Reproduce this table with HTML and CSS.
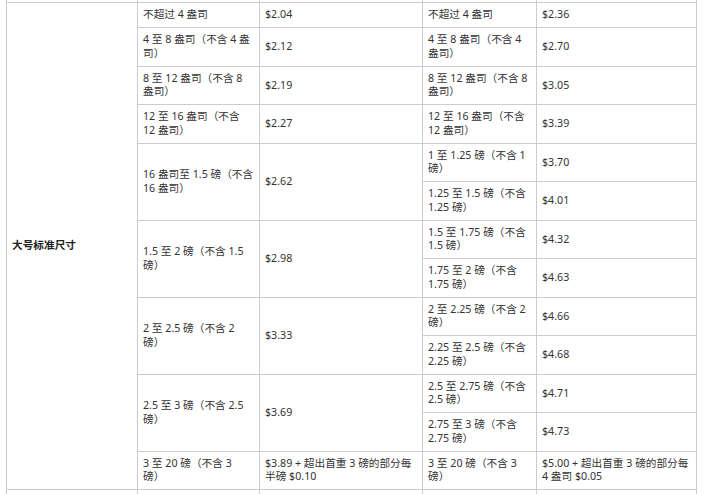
FILE: index.html
```html
<!DOCTYPE html>
<html lang="zh-CN">
<head>
    <meta charset="UTF-8">
    <meta name="viewport" content="width=device-width, initial-scale=1.0">
    <title>配送费用</title>
    <link rel="stylesheet" href="styles.css">
</head>
<body>
<table class="rates">
    <colgroup>
        <col class="col-tier">
        <col class="col-weight">
        <col class="col-fee">
        <col class="col-weight2">
        <col class="col-fee2">
    </colgroup>
    <tbody>
        <tr class="stub-top">
            <td></td><td></td><td></td><td></td><td></td>
        </tr>
        <tr>
            <td class="tier" rowspan="13">大号标准尺寸</td>
            <td>不超过 4 盎司</td>
            <td>$2.04</td>
            <td>不超过 4 盎司</td>
            <td>$2.36</td>
        </tr>
        <tr>
            <td>4 至 8 盎司（不含 4 盎司）</td>
            <td>$2.12</td>
            <td>4 至 8 盎司（不含 4 盎司）</td>
            <td>$2.70</td>
        </tr>
        <tr>
            <td>8 至 12 盎司（不含 8 盎司）</td>
            <td>$2.19</td>
            <td>8 至 12 盎司（不含 8 盎司）</td>
            <td>$3.05</td>
        </tr>
        <tr>
            <td>12 至 16 盎司（不含 12 盎司）</td>
            <td>$2.27</td>
            <td>12 至 16 盎司（不含 12 盎司）</td>
            <td>$3.39</td>
        </tr>
        <tr>
            <td rowspan="2">16 盎司至 1.5 磅（不含 16 盎司）</td>
            <td rowspan="2">$2.62</td>
            <td>1 至 1.25 磅（不含 1 磅）</td>
            <td>$3.70</td>
        </tr>
        <tr>
            <td>1.25 至 1.5 磅（不含 1.25 磅）</td>
            <td>$4.01</td>
        </tr>
        <tr>
            <td rowspan="2">1.5 至 2 磅（不含 1.5 磅）</td>
            <td rowspan="2">$2.98</td>
            <td>1.5 至 1.75 磅（不含 1.5 磅）</td>
            <td>$4.32</td>
        </tr>
        <tr>
            <td>1.75 至 2 磅（不含 1.75 磅）</td>
            <td>$4.63</td>
        </tr>
        <tr>
            <td rowspan="2">2 至 2.5 磅（不含 2<br>磅）</td>
            <td rowspan="2">$3.33</td>
            <td>2 至 2.25 磅（不含 2 磅）</td>
            <td>$4.66</td>
        </tr>
        <tr>
            <td>2.25 至 2.5 磅（不含 2.25 磅）</td>
            <td>$4.68</td>
        </tr>
        <tr>
            <td rowspan="2">2.5 至 3 磅（不含 2.5 磅）</td>
            <td rowspan="2">$3.69</td>
            <td>2.5 至 2.75 磅（不含 2.5 磅）</td>
            <td>$4.71</td>
        </tr>
        <tr>
            <td>2.75 至 3 磅（不含 2.75 磅）</td>
            <td>$4.73</td>
        </tr>
        <tr>
            <td>3 至 20 磅（不含 3<br>磅）</td>
            <td>$3.89 + 超出首重 3 磅的部分每半磅 $0.10</td>
            <td>3 至 20 磅（不含 3<br>磅）</td>
            <td>$5.00 + 超出首重 3 磅的部分每 4 盎司 $0.05</td>
        </tr>
        <tr class="stub-bottom">
            <td>&nbsp;</td><td>&nbsp;</td><td>&nbsp;</td><td>&nbsp;</td><td>&nbsp;</td>
        </tr>
    </tbody>
</table>
</body>
</html>
```

FILE: styles.css
```css
body {
    margin: 0;
    font-family: "Noto Sans", "Noto Sans CJK SC", sans-serif;
    font-size: 10.67px;
    color: #333;
    background-color: #fff;
    overflow: hidden;
}
.rates {
    border-collapse: collapse;
    table-layout: fixed;
    width: 690px;
    margin-left: 6px;
}
.col-tier { width: 131px; }
.col-weight { width: 122px; }
.col-fee { width: 163px; }
.col-weight2 { width: 114px; }
.col-fee2 { width: 160px; }
.rates td {
    border: 1px solid #ccc;
    padding: 5.25px 5px;
    line-height: 13.5px;
    vertical-align: middle;
    text-align: left;
}
.rates td.tier {
    font-weight: bold;
    color: #222;
}
.stub-top td {
    border-top: none;
    padding: 0;
    height: 2px;
    line-height: 0;
}
.stub-bottom td {
    height: 20px;
}
```
